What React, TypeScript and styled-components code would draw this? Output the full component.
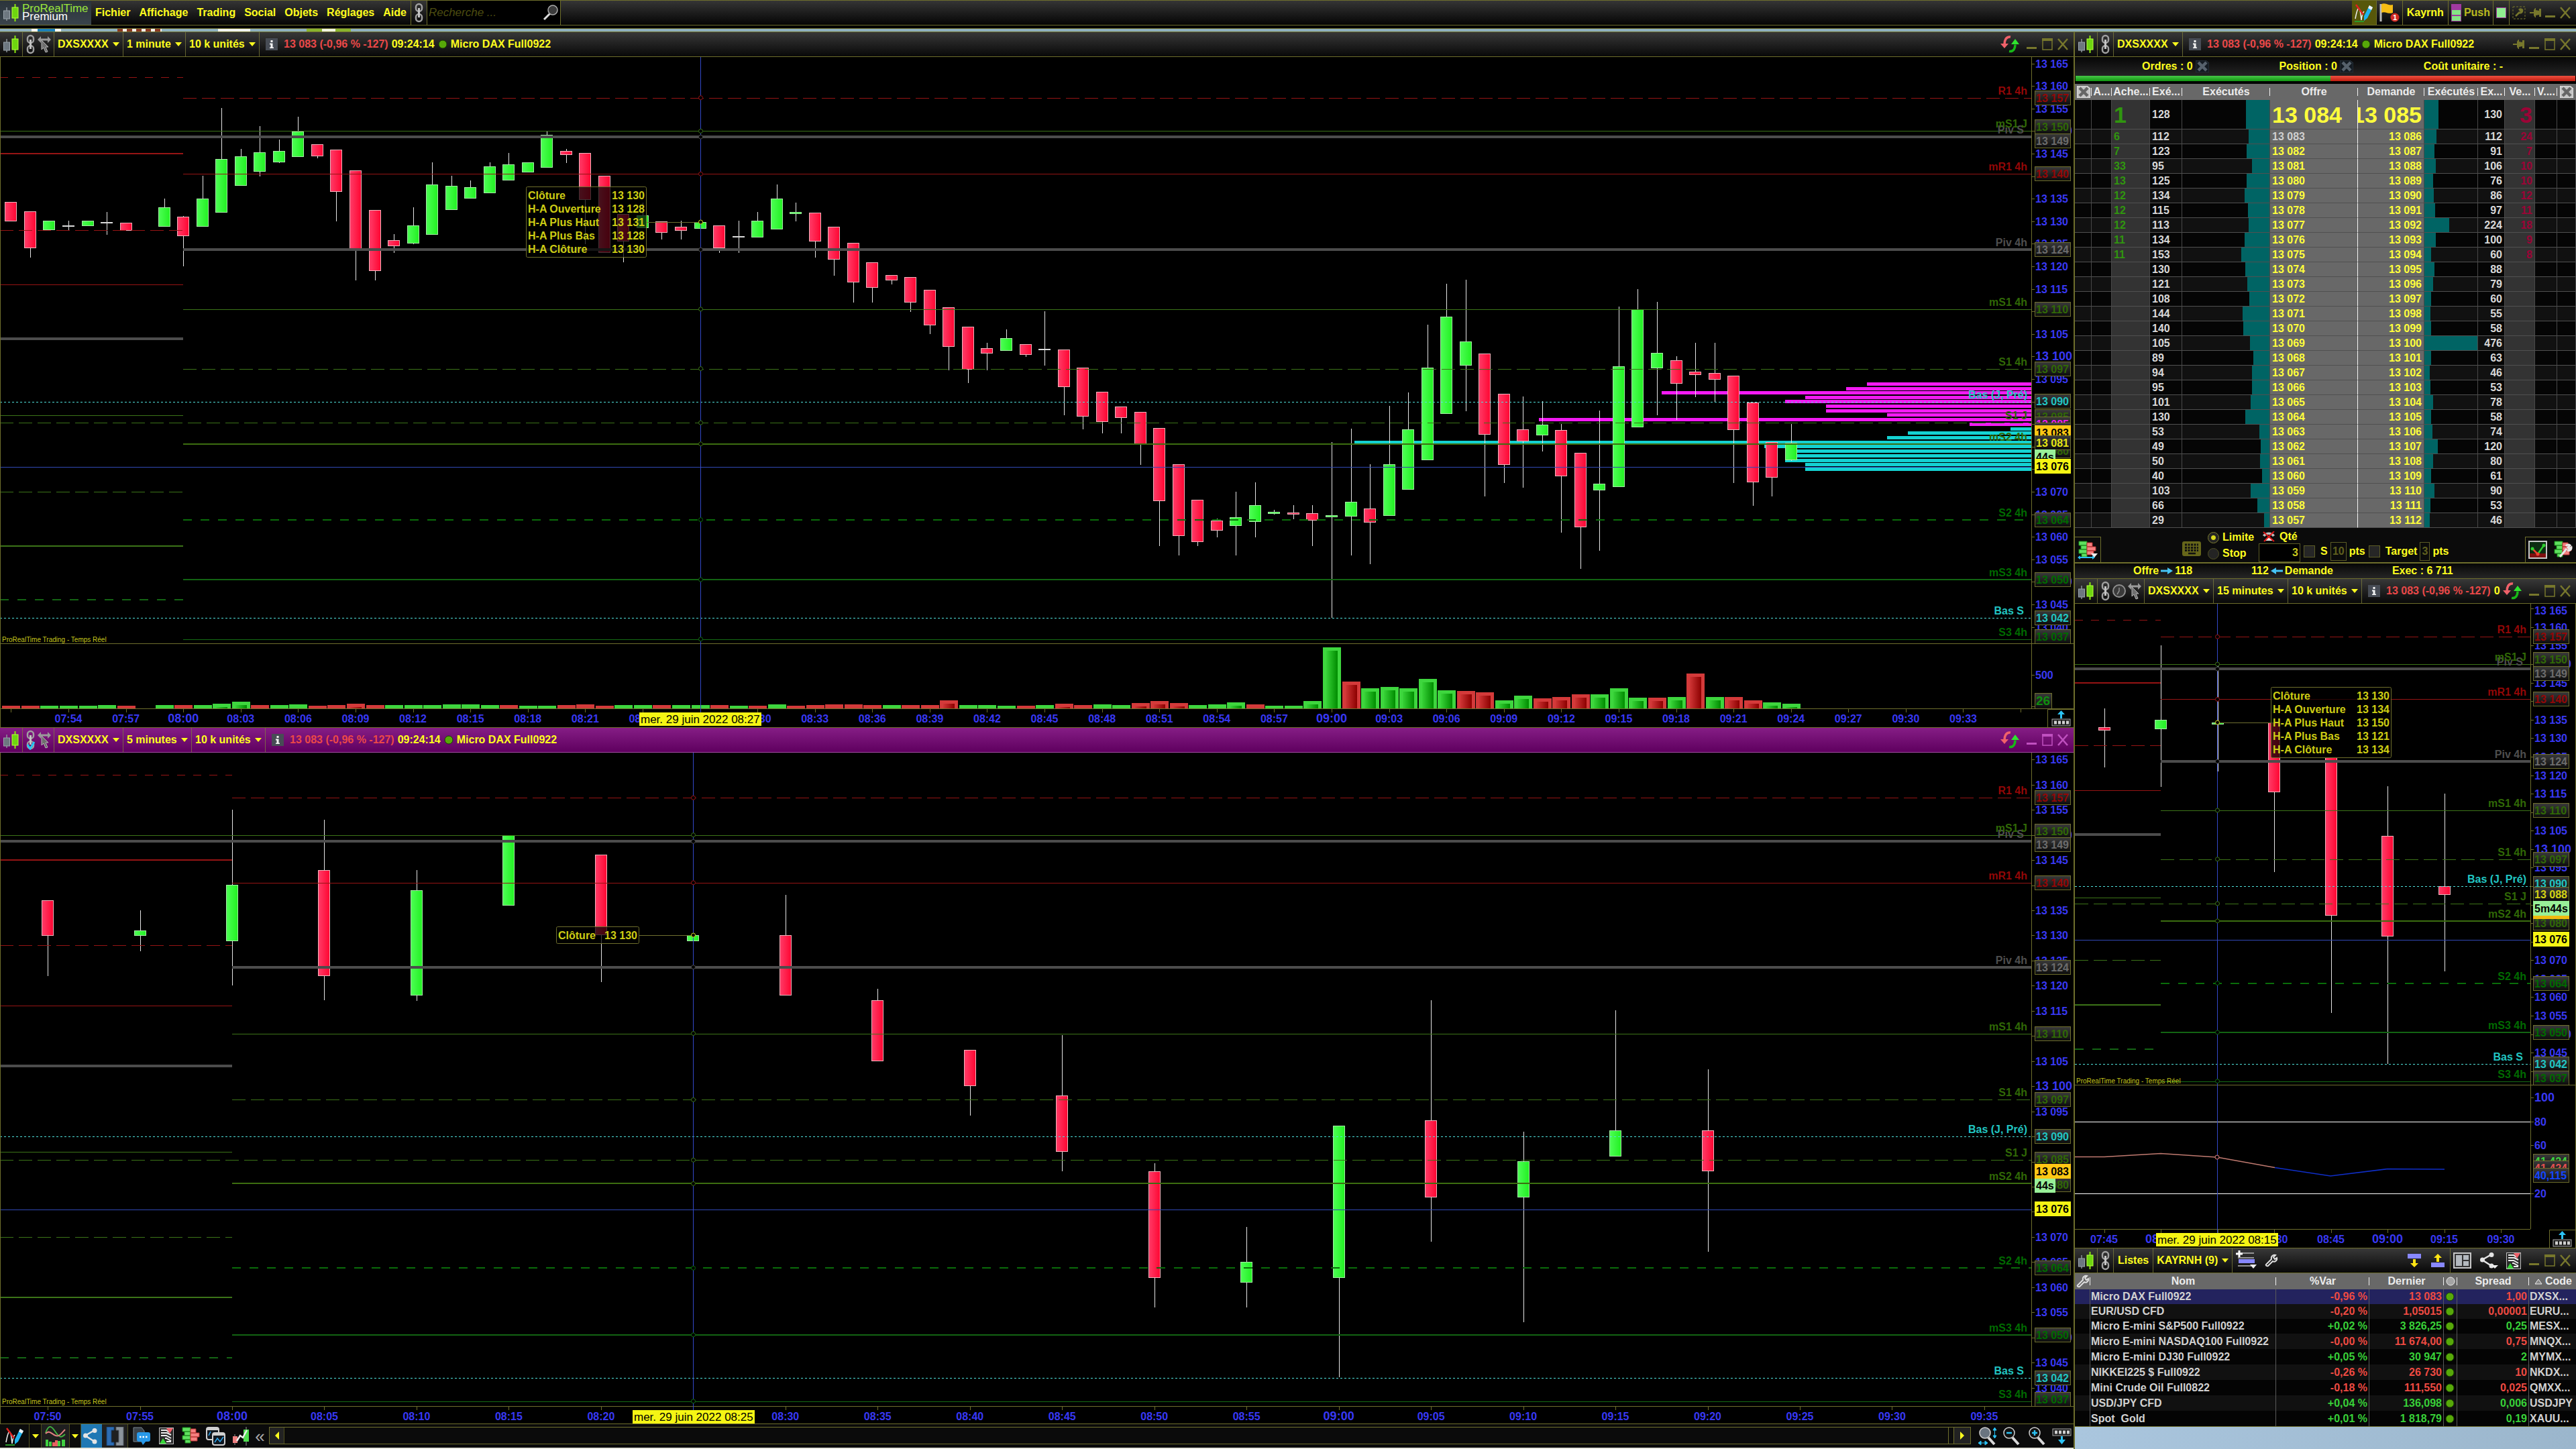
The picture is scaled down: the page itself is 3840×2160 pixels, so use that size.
import React from "react";
import styled, { createGlobalStyle, css } from "styled-components";

const OLIVE = "#6e6e2c";
const YELLOW = "#ffff1e";
const FONT = `"Liberation Sans", Arial, sans-serif`;

const GlobalStyle = createGlobalStyle`
  * { box-sizing: border-box; }
  body { margin: 0; background: #000; font: bold 16px/20px ${FONT}; color: ${YELLOW}; overflow: hidden; }
  button, input, select { font: inherit; color: inherit; margin: 0; }
  svg { display: block; flex: none; }
`;

/* ---------- page ---------- */

const Screen = styled.div`
  height: 100vh;
  display: flex;
  flex-direction: column;
`;

const plainButton = css`
  background: none;
  border: 0;
  padding: 0;
  display: flex;
  align-items: center;
  justify-content: center;
`;

const IconButton = styled.button`
  ${plainButton}
`;

const MenuBar = styled.header`
  height: 38px;
  flex: none;
  display: flex;
  border-top: 1px solid ${OLIVE};
  border-bottom: 1px solid ${OLIVE};
  background: linear-gradient(#353535, #050505);
`;

const Brand = styled.div`
  display: flex;
  align-items: center;
  gap: 4px;
  width: 136px;
  padding-left: 4px;
  background: linear-gradient(#2b343b, #39434b);
  font-weight: normal;
  font-size: 17px;
  line-height: 12px;
`;
const BrandName = styled.div`color: #9ae63c;`;
const BrandTier = styled.div`color: #fff;`;

const MenuItems = styled.nav`
  display: flex;
  align-items: center;
  gap: 13px;
  padding: 0 6px;
  border-right: 1px solid ${OLIVE};
`;

const MenuCell = styled.div<{ $pad?: number; $lit?: boolean; $dim?: boolean }>`
  display: flex;
  align-items: center;
  gap: 4px;
  padding: 0 ${(p) => p.$pad ?? 5}px;
  border-right: 1px solid ${OLIVE};
  background: ${(p) => (p.$lit ? "#57570a" : "none")};
  color: ${(p) => (p.$dim ? "#b9b91e" : YELLOW)};
`;

const SearchBox = styled.label`
  display: flex;
  align-items: center;
  width: 199px;
  padding: 0 2px;
  background: #000;
  border-right: 1px solid ${OLIVE};
`;
const SearchInput = styled.input`
  flex: 1;
  min-width: 0;
  background: none;
  border: 0;
  padding: 0;
  outline: none;
  font: italic 17px/20px ${FONT};
  &::placeholder { color: #4c4c10; opacity: 1; }
`;

const Spacer = styled.div`flex: 1;`;

const WindowButtons = styled.div`
  display: flex;
  align-items: center;
  gap: 6px;
  padding: 0 8px 0 4px;
`;

const DesktopStrip = styled.div`
  height: 5px;
  margin-top: 4px;
  flex: none;
  display: flex;
  border-top: 1px solid ${OLIVE};
  background: #8fb2c0;
  padding-left: 47px;
  gap: 84px;
`;
const StripIcon = styled.i<{ $bg: string; $w: number }>`
  width: ${(p) => p.$w}px;
  background: ${(p) => p.$bg};
`;

const Workspace = styled.main`
  flex: 1;
  min-height: 0;
  display: grid;
  grid-template-columns: minmax(0, 1fr) 749px;
`;
const Column = styled.section`
  display: flex;
  flex-direction: column;
  min-width: 0;
  min-height: 0;
`;
const SideColumn = styled(Column)`
  border-left: 2px solid ${OLIVE};
`;

/* ---------- title bars ---------- */

const Bar = styled.div<{ $active?: boolean }>`
  height: 38px;
  flex: none;
  display: flex;
  overflow: hidden;
  white-space: nowrap;
  border-top: 1px solid ${OLIVE};
  border-bottom: 1px solid ${(p) => (p.$active ? "#a04aa0" : OLIVE)};
  background: ${(p) =>
    p.$active ? "linear-gradient(#851d85, #5f005f)" : "linear-gradient(#383838, #080808)"};
`;
const BarCell = styled.div<{ $pad?: number }>`
  display: flex;
  align-items: center;
  gap: 3px;
  padding: 0 ${(p) => p.$pad ?? 4}px;
  border-right: 1px solid rgba(128, 128, 60, 0.75);
`;
const Quote = styled.div`
  flex: 1;
  min-width: 0;
  overflow: hidden;
  display: flex;
  align-items: center;
  gap: 5px;
  padding-left: 9px;
`;
const QuoteChange = styled.span`
  color: #ea4848;
  padding-left: 4px;
`;
const BarTools = styled.div<{ $gap?: number; $end?: number }>`
  display: flex;
  align-items: center;
  gap: ${(p) => p.$gap ?? 8}px;
  padding: 0 ${(p) => p.$end ?? 8}px 0 4px;
`;
const RefreshSlot = styled.div`margin-right: 4px;`;

const SelectWrap = styled.label`
  display: flex;
  align-items: center;
  gap: 6px;
  padding: 0 1px;
`;
const Select = styled.select`
  appearance: none;
  background: none;
  border: 0;
  padding: 0;
  outline: none;
`;

function Picker({ value, name }: { value: string; name: string }) {
  return (
    <BarCell>
      <SelectWrap>
        <Select aria-label={name} defaultValue={value}>
          <option>{value}</option>
        </Select>
        <Caret />
      </SelectWrap>
    </BarCell>
  );
}

/* ---------- icons ---------- */

const Caret = () => (
  <svg width="10" height="6"><path d="M0 0h10L5 6z" fill="#ffff1e" /></svg>
);

const CandlesIcon = () => (
  <svg width="25" height="28" viewBox="0 0 25 28">
    <path d="M6 6v20" stroke="#8a9299" strokeWidth="1.500" />
    <rect x="1.500" y="11" width="9" height="12" fill="#6d7780" stroke="#9aa4ac" />
    <path d="M18.500 1v26" stroke="#8be80c" strokeWidth="2" />
    <rect x="14" y="6" width="9" height="16" fill="#6ed60f" stroke="#b6ff3c" />
  </svg>
);

const ChainIcon = ({ checked }: { checked?: boolean }) => (
  <svg width="15" height="30" viewBox="0 0 15 30" fill="none" stroke="#a0a0a0" strokeWidth="2.500">
    <rect x="3" y="2" width="9" height="11" rx="4.500" />
    <rect x="3" y="17" width="9" height="11" rx="4.500" />
    <path d="M7.500 8v14" stroke="#c4c4c4" strokeWidth="3" />
    {checked && <path d="M3 22l4 6 6-10" stroke="#26c6f4" strokeWidth="3" />}
  </svg>
);

const CursorIcon = () => (
  <svg width="20" height="26" viewBox="0 0 20 26" fill="#9a9a9a">
    <path d="M0 6l5-5v3.500h10V1l5 5-5 5V7.500H5V11z" />
    <path d="M6 7l10 10h-4l3 7-3 1-3-7-3 3z" fill="#6f6f6f" stroke="#b5b5b5" />
  </svg>
);

const ClockIcon = () => (
  <svg width="20" height="26" viewBox="1 0 20 26" fill="none" stroke="#8f8f8f" strokeWidth="2">
    <circle cx="11" cy="13" r="9" fill="#3a3a3a" />
    <path d="M11 8v5l-3 5" strokeWidth="1.500" />
  </svg>
);

const InfoIcon = () => (
  <svg width="18" height="18" viewBox="0 0 18 18">
    <rect width="18" height="18" fill="#474c55" />
    <path d="M7.500 3h3v3h-3zM6 7.500h4.500v6H12v1.500H6v-1.500h1.500v-4H6z" fill="#f4f4f4" />
  </svg>
);

const Dot = () => (
  <svg width="14" height="14" viewBox="0 0 14 14">
    <circle cx="7" cy="7" r="6" fill="#57a809" stroke="#173f00" />
  </svg>
);

const SwapIcon = () => (
  <svg width="28" height="26" viewBox="0 0 28 26" fill="none" strokeWidth="3.500">
    <path d="M15 2C8 1 6 8 6 13" stroke="#f0616a" />
    <path d="M0 12h12l-6 7z" fill="#f0616a" />
    <path d="M13 23.500c7 1 9-5 9-10" stroke="#18b818" />
    <path d="M16 13h12l-6-8z" fill="#2fe52f" />
  </svg>
);

const MinIcon = ({ c }: { c: string }) => (
  <svg width="16" height="18"><rect y="13" width="15" height="3" fill={c} /></svg>
);
const MaxIcon = ({ c }: { c: string }) => (
  <svg width="16" height="18">
    <path d="M1 1h14v16H1z" fill="none" stroke={c} strokeWidth="1.500" />
    <rect width="16" height="4" fill={c} />
  </svg>
);
const CloseIcon = ({ c }: { c: string }) => (
  <svg width="16" height="18"><path d="M1 1l14 16M15 1L1 17" stroke={c} strokeWidth="2.500" /></svg>
);
const PinIcon = () => (
  <svg width="17" height="16" viewBox="0 0 17 16">
    <path d="M0 7h6V4l2-3h1v3l5 1V2h3v12h-3v-3l-5 1v3H8l-2-3V9H0z" fill="#77772c" />
  </svg>
);

const PencilIcon = () => (
  <svg width="28" height="28" viewBox="0 0 28 28" fill="none">
    <path d="M1 23c4-22 7-20 9 2 1-8 2-11 4-13" stroke="#eee" strokeWidth="1.500" />
    <path d="M2 2l11 15" stroke="#e02020" strokeWidth="2.500" />
    <path d="M0 27h14" stroke="#2a9a2a" strokeWidth="2" />
    <path d="M14 19L22 3l5 3-8 16-5 4z" fill="#1fb4f0" />
    <path d="M22 3l5 3-2 4-5-3z" fill="#f2f2f2" />
  </svg>
);
const FlagIcon = () => (
  <svg width="30" height="30" viewBox="0 0 30 30">
    <path d="M2 2v26" stroke="#bbb" strokeWidth="3" />
    <path d="M3 2c6-3 10 3 17 1v12c-7 3-11-3-17 0z" fill="#f6bd14" />
    <circle cx="23" cy="22" r="6.500" fill="#d02a22" />
    <text x="23" y="26" textAnchor="middle" fontSize="11" fill="#fff">1</text>
  </svg>
);
const PushIcon = () => (
  <svg width="15" height="26">
    <rect width="15" height="26" fill="#a03aa0" />
    <path d="M1 9h13v7H1zM1 18h13v7H1z" fill="#84e684" />
  </svg>
);
const SquareIcon = () => (
  <svg width="15" height="16"><rect x=".5" y=".5" width="14" height="15" fill="#90ee90" stroke="#a03aa0" /></svg>
);
const ToolsIcon = () => (
  <svg width="20" height="20" viewBox="0 0 20 20" fill="none" stroke="#77772c">
    <rect x="1" y="1" width="18" height="18" strokeDasharray="3 2" />
    <path d="M5 15l6-6M10 6a3 3 0 0 1 4-1l-2 2 1 1 2-1a3 3 0 0 1-4 3" strokeWidth="2.500" />
  </svg>
);
const LensIcon = ({ sign }: { sign?: "+" | "-" | "fit" }) => (
  <svg width="28" height="28" viewBox="0 0 28 28" fill="none">
    <path d="M15 16l9 10" stroke="#d8d8d8" strokeWidth="4" />
    <circle cx="10" cy="9" r="8" fill={sign === "fit" ? "#6a7480" : "#111"} stroke="#d0d0d0" strokeWidth="1.500" />
    {(sign === "+" || sign === "-") && <path d="M6 9h8" stroke="#2cc3f5" strokeWidth="2.500" />}
    {sign === "+" && <path d="M10 5v8" stroke="#2cc3f5" strokeWidth="2.500" />}
    {sign === "fit" && (
      <path d="M24.500 4v10M1 24h12M22 5l2.500-4L27 5zM22 13l2.500 4 2.500-4zM4 21l-4 3 4 3zM10 21l4 3-4 3z" stroke="#2cc3f5" fill="#2cc3f5" />
    )}
  </svg>
);
const SearchIcon = () => (
  <svg width="24" height="24" viewBox="0 0 24 24" fill="none">
    <path d="M11 13L2 22" stroke="#ddd" strokeWidth="3" />
    <circle cx="15" cy="8" r="7" fill="#3c3c3c" stroke="#aaa" strokeWidth="1.500" />
  </svg>
);
const CrossPageIcon = ({ light }: { light?: boolean }) => (
  <svg width="20" height="18" viewBox="0 0 20 18">
    <path d="M0 0h15l5 4v14H0z" fill={light ? "#c4c4c4" : "#141b22"} stroke={light ? "#eee" : "#2e3a44"} />
    <path d="M4 3l12 12M16 3L4 15" stroke={light ? "#666" : "#56616c"} strokeWidth="4.500" />
  </svg>
);
const KeyboardIcon = () => (
  <svg width="28" height="22" viewBox="0 0 28 22">
    <rect width="28" height="22" rx="3" fill="#66661a" />
    <path d="M4 5h20M4 9.500h20M4 13.500h20" stroke="#111" strokeWidth="3" strokeDasharray="3 1.500" />
    <path d="M9 18h11" stroke="#111" strokeWidth="2.500" />
  </svg>
);
const LadderIcon = ({ arrows, tool }: { arrows?: boolean; tool?: boolean }) => (
  <svg width="30" height="28" viewBox="0 0 30 28">
    <path d="M2 1h12v6H2zM5 7h9v6H5zM2 13h12v6H2zM6 19h8v5H6z" fill="#5fe05f" stroke="#1c8c1c" />
    <path d="M14 3h8v6h-8zM14 9h13v6H14zM14 15h10v6H14z" fill="#f58080" stroke="#b83030" />
    {arrows && <path d="M0 25l4-3v2h18v-2l4 3-4 3v-2H4v2z" fill="#2cc3f5" />}
    {arrows && <path d="M20 19h10l-5 6z" fill="#eee" />}
    {tool && <path d="M10 24L20 12M19 8a4 4 0 0 1 6-1l-3 3 2 2 3-2a4 4 0 0 1-6 4" stroke="#e8e8e8" strokeWidth="3" fill="none" />}
  </svg>
);
const StrategyIcon = () => (
  <svg width="28" height="27" viewBox="0 0 28 27" fill="none">
    <rect x="1" y="1" width="26" height="25" fill="#0d2d12" stroke="#c8c8c8" strokeWidth="2" />
    <path d="M2 19h24v6H2z" fill="#801010" />
    <path d="M6 12l8 8" stroke="#f04030" strokeWidth="2.500" />
    <path d="M14 20L23 7" stroke="#30d030" strokeWidth="2.500" />
    <circle cx="6" cy="12" r="2.500" fill="#30d030" /><circle cx="14" cy="20" r="2.500" fill="#f04030" /><circle cx="23" cy="7" r="2.500" fill="#30d030" />
  </svg>
);
const PhoneOffIcon = () => (
  <svg width="20" height="16" viewBox="0 0 20 16">
    <path d="M1 6c4-6 14-6 18 0l-3 2-3-3H7L4 8z" fill="#bdbdbd" />
    <path d="M5 14c0-6 10-6 10 0z" fill="#e6e6e6" />
    <path d="M2 1l16 14M18 0L3 15" stroke="#e01818" strokeWidth="2" />
  </svg>
);
const ArrowIcon = ({ left }: { left?: boolean }) => (
  <svg width="18" height="10" viewBox="0 0 18 10">
    <path d={left ? "M18 3.500H8V0L0 5l8 5V6.500h10z" : "M0 3.500h10V0l8 5-8 5V6.500H0z"} fill="#45c4f4" />
  </svg>
);
const AddListIcon = () => (
  <svg width="32" height="30" viewBox="0 0 32 30">
    <path d="M4 4h24M4 11h24M4 23h24" stroke="#b8b8b8" strokeWidth="1.500" />
    <rect x="5" y="13" width="24" height="6" fill="#8888ff" />
    <path d="M6 0v10M1 5h10" stroke="#fff" strokeWidth="3" />
    <path d="M22 21h10l-5 6z" fill="#eee" />
  </svg>
);
const WrenchIcon = () => (
  <svg width="20" height="20" viewBox="0 0 20 20" fill="none" stroke="#e0e0e0" strokeWidth="2">
    <path d="M2 16l8-8c-1-4 2-7 6-6l-3 3 2 3 3-2c1 4-3 7-6 5l-7 7c-2 1-4-1-3-2z" />
  </svg>
);
const MoveIcon = ({ up }: { up?: boolean }) => (
  <svg width="20" height="20" viewBox="0 0 20 20">
    <rect y={up ? 13 : 0} width="20" height="7" fill="#8888ff" />
    <path d={up ? "M8 12V6H4l6-6 6 6h-4v6z" : "M8 8v6H4l6 6 6-6h-4V8z"} fill="#ffe414" />
  </svg>
);
const PanesIcon = () => (
  <svg width="27" height="24" viewBox="0 0 27 24">
    <rect x="1" y="1" width="25" height="22" fill="#333" stroke="#c6c6c6" strokeWidth="2" />
    <path d="M4 4h9v16H4zM15 4h8v7h-8zM15 13h8v7h-8z" fill="#b4b9be" />
  </svg>
);
const ShareIcon = ({ caret }: { caret?: boolean }) => (
  <svg width="28" height="26" viewBox="0 0 28 26">
    <path d="M18 4L4 12l14 9" stroke="#e4e4e4" strokeWidth="2.500" fill="none" />
    <circle cx="18" cy="4.500" r="3.500" fill="#e4e4e4" /><circle cx="4.500" cy="12" r="3.500" fill="#e4e4e4" /><circle cx="18" cy="21" r="3.500" fill="#e4e4e4" />
    {caret && <path d="M18 20h10l-5 5z" fill="#eee" />}
  </svg>
);
const ReportIcon = () => (
  <svg width="22" height="25" viewBox="0 0 22 25">
    <rect x=".5" y=".5" width="21" height="24" fill="#2c2c2c" stroke="#bbb" />
    <path d="M3 4h8l4 3M3 8h9l6 3M3 12h8l7 4M9 16h2l7 4M11 21h7" stroke="#eee" strokeWidth="2" fill="none" />
    <path d="M11 1h10l-5 8z" fill="#f0606a" /><path d="M1 24h10l-5-8z" fill="#38d838" />
  </svg>
);
const IndicatorIcon = () => (
  <svg width="31" height="30" viewBox="0 0 31 30" fill="none">
    <path d="M1 10C6-4 10 0 16 9s9 8 14 3" stroke="#40b040" strokeWidth="2" />
    <path d="M1 11c6-6 9 1 15 3s9-4 14-9" stroke="#e08080" strokeWidth="2" />
    <path d="M1 20h4v10H1zM6 23h4v7H6zM19 22h4v8h-4zM25 20h5v10h-5z" fill="#40d040" />
    <path d="M11 24h4v6h-4zM15 21h4v9h-4z" fill="#e86060" />
  </svg>
);
const BracketsIcon = () => (
  <svg width="29" height="28" viewBox="0 0 29 28">
    <path d="M2 0h11v5H9v18h4v5H2z" fill="#2d6db4" stroke="#16406e" />
    <path d="M27 0H16v5h4v18h-4v5h11z" fill="#8c949c" stroke="#555d66" />
  </svg>
);
const ChatIcon = () => (
  <svg width="27" height="27" viewBox="0 0 27 27">
    <path d="M2 1h12l4 5v16H2z" fill="#3b4249" stroke="#7b858e" />
    <rect x="7" y="8" width="20" height="14" rx="3" fill="#2898e8" /><path d="M13 21h8l-5 6z" fill="#2898e8" />
    <path d="M11 15h12" stroke="#fff" strokeWidth="2.500" strokeDasharray="2.500 2" />
  </svg>
);
const WindowsIcon = () => (
  <svg width="29" height="28" viewBox="0 0 29 28" fill="none">
    <rect x="1" y="1" width="18" height="18" rx="3" fill="#101820" stroke="#d0d0d0" strokeWidth="2" />
    <rect x="10" y="9" width="18" height="18" rx="3" fill="#101820" stroke="#d0d0d0" strokeWidth="2" />
    <path d="M10 11h18M1 3h18" stroke="#d0d0d0" strokeWidth="4" />
    <path d="M13 23l4-6 4 5 5-7M4 13l3-6" stroke="#30a8f0" strokeWidth="1.500" />
  </svg>
);
const TradeCandlesIcon = () => (
  <svg width="26" height="28" viewBox="0 0 26 28" fill="none">
    <path d="M4 11v16M21 0v28" stroke="#999" />
    <rect x="1" y="14" width="7" height="10" fill="#f08080" /><rect x="17" y="4" width="8" height="18" fill="#50e050" />
    <path d="M7 21l5-8 4 3 6-11" stroke="#eee" strokeWidth="2.500" />
  </svg>
);
const AxisKeysIcon = ({ down }: { down?: boolean }) => (
  <svg width="29" height="24" viewBox="0 0 29 24">
    <rect x="1" y={down ? 1 : 13} width="27" height="10" fill="#1e1e1e" stroke="#a8a8a8" />
    <path d={down ? "M4 6h22" : "M4 18h22"} stroke="#d0d0d0" strokeWidth="5" strokeDasharray="4 2" />
    <path d={down ? "M13 12h3v5h4l-5.500 7L9 17h4z" : "M13 12h3V6h4l-5.500-6L9 6h4z"} fill="#2cc3f5" />
  </svg>
);

/* ---------- charts ---------- */

type Candle = [number, "g" | "r" | "d", number, number, number, number];

const Label = styled.text<{ $size?: number; $weight?: string }>`
  font: ${(p) => p.$weight ?? "bold"} ${(p) => p.$size ?? 16}px ${FONT};
  white-space: pre;
`;
const ChartFrame = styled.svg<{ $grow: number }>`
  flex: ${(p) => p.$grow} 1 0;
  min-height: 0;
  width: 100%;
  background: #000;
`;

const RED = "#961414", GREEN = "#3c7418", FOREST = "#146414", GREY = "#4c4c4c", CYAN = "#21c5c2", CYAN_LINE = "#4fe0da";
const DARK_RED = "#930707", DARK_GREEN = "#306806", DEEP_GREEN = "#006a00", BLUE = "#3838f4";

interface Level {
  p: number; c: string; w: number; dash?: string; span: "all" | "session" | "prev";
  name?: string; text?: string; inset?: number;
}
const LEVELS: Level[] = [
  { p: 13162, c: RED, w: 1, dash: "12 12", span: "prev" },
  { p: 13145, c: RED, w: 2, span: "prev" },
  { p: 13128.1, c: RED, w: 1, dash: "20 8", span: "prev" },
  { p: 13116, c: RED, w: 1, span: "prev" },
  { p: 13104, c: GREY, w: 4, span: "prev" },
  { p: 13087, c: GREEN, w: 1, span: "prev" },
  { p: 13070, c: GREEN, w: 1, dash: "20 8", span: "prev" },
  { p: 13058, c: GREEN, w: 2, span: "prev" },
  { p: 13046, c: FOREST, w: 2, dash: "13 13", span: "prev" },
  { p: 13157.4, c: RED, w: 1, dash: "20 8", span: "session", name: "R1 4h", text: DARK_RED },
  { p: 13148.7, c: GREY, w: 4, span: "all", name: "Piv S", text: "#4e4e4e", inset: 5 },
  { p: 13150, c: GREEN, w: 1, span: "all", name: "mS1 J", text: DARK_GREEN },
  { p: 13140.5, c: RED, w: 1, span: "session", name: "mR1 4h", text: DARK_RED },
  { p: 13123.7, c: GREY, w: 4, span: "session", name: "Piv 4h", text: "#4e4e4e" },
  { p: 13110.5, c: GREEN, w: 1, span: "session", name: "mS1 4h", text: DARK_GREEN },
  { p: 13097.3, c: GREEN, w: 1, dash: "20 8", span: "session", name: "S1 4h", text: DARK_GREEN },
  { p: 13090, c: CYAN_LINE, w: 1, dash: "3 3", span: "all", name: "Bas (J, Pré)", text: CYAN },
  { p: 13085.3, c: GREEN, w: 1, dash: "20 8", span: "all", name: "S1 J", text: DARK_GREEN },
  { p: 13080.6, c: "#3c6e10", w: 2, span: "session", name: "mS2 4h", text: DARK_GREEN },
  { p: 13075.5, c: "#3148b4", w: 1, span: "all" },
  { p: 13063.8, c: "#0a6c0a", w: 2, dash: "13 13", span: "session", name: "S2 4h", text: DEEP_GREEN },
  { p: 13050.5, c: "#126412", w: 2, span: "session", name: "mS3 4h", text: DEEP_GREEN },
  { p: 13042, c: CYAN_LINE, w: 1, dash: "3 3", span: "all", name: "Bas S", text: CYAN, inset: 5 },
  { p: 13037.3, c: "#146c14", w: 1, span: "session", name: "S3 4h", text: DEEP_GREEN },
];
const CROSSED = [13157.4, 13150, 13148.7, 13140.5, 13123.7, 13110.5, 13097.3, 13085.3, 13080.6, 13063.8, 13050.5, 13037.3];

interface Tag { y: number; t: string; c: string; bg?: string; w?: number; h?: number; size?: number }

const spaced = (p: number) => `13 ${String(p - 13000).padStart(3, "0")}`;
const clock = (m: number) => `${String(Math.floor(m / 60)).padStart(2, "0")}:${String(m % 60).padStart(2, "0")}`;

function ChartDefs() {
  return (
    <defs>
      <linearGradient id="up"><stop offset="0" stopColor="#4dff55" /><stop offset="1" stopColor="#22f022" /></linearGradient>
      <linearGradient id="down"><stop offset="0" stopColor="#ff3c68" /><stop offset="1" stopColor="#ff0531" /></linearGradient>
      <linearGradient id="volUp"><stop offset="0" stopColor="#37d237" /><stop offset="1" stopColor="#008c00" /></linearGradient>
      <linearGradient id="volDown"><stop offset="0" stopColor="#cf3535" /><stop offset="1" stopColor="#8c0000" /></linearGradient>
      <linearGradient id="tag" x2="0" y2="1"><stop offset="0" stopColor="#3a3a3a" /><stop offset="1" stopColor="#0c0c0c" /></linearGradient>
    </defs>
  );
}

function Candles({ data, x }: { data: Candle[]; x: (i: number) => number }) {
  return (
    <g shapeRendering="crispEdges">
      {data.map(([i, kind, hi, top, bot, lo]) => {
        const cx = Math.round(x(i));
        return (
          <g key={i}>
            <rect x={cx} y={hi} width="1" height={lo - hi} fill="#e6e6e6" />
            {kind === "d" ? (
              <rect x={cx - 9} y={top} width="18" height="2" fill="#dcdcdc" />
            ) : (
              <rect x={cx - 8.5} y={top + 0.5} width="17" height={Math.max(bot - top - 1, 1)}
                fill={`url(#${kind === "g" ? "up" : "down"})`} stroke={kind === "g" ? "#a5eba5" : "#f2b4bc"} />
            )}
          </g>
        );
      })}
    </g>
  );
}

function Levels({ x0, session, right, y }: { x0: number; session: number; right: number; y: (p: number) => number }) {
  return (
    <>
      <g shapeRendering="crispEdges">
        {LEVELS.map((l) => {
          const yy = Math.round(y(l.p)) + (l.w === 1 ? 0.5 : 0);
          return (
            <line key={`${l.p}${l.span}`} x1={l.span === "session" ? session : x0} x2={l.span === "prev" ? session : right}
              y1={yy} y2={yy} stroke={l.c} strokeWidth={l.w} strokeDasharray={l.dash} />
          );
        })}
      </g>
      {LEVELS.filter((l) => l.name).map((l) => (
        <Label key={l.name} x={right - 6 - (l.inset ?? 0)} y={y(l.p) - 5} textAnchor="end" fill={l.text}>{l.name}</Label>
      ))}
    </>
  );
}

function PriceAxis({ right, top, bottom, y, hidden }: { right: number; top: number; bottom: number; y: (p: number) => number; hidden: number[] }) {
  const prices = Array.from({ length: 26 }, (_, i) => 13165 - i * 5);
  return (
    <>
      <path d={`M${right + 0.5} ${top}V${bottom}`} stroke={OLIVE} />
      {prices.map((p) => (
        <g key={p}>
          <path d={`M${right} ${Math.round(y(p)) + 0.5}h5`} stroke={OLIVE} />
          {!hidden.includes(p) && (
            <Label x={right + 6} y={Math.max(y(p) + 6, top + 16)} fill={BLUE} $size={p % 50 ? 16 : 18}>{spaced(p)}</Label>
          )}
        </g>
      ))}
    </>
  );
}

function Tags({ x, tags }: { x: number; tags: Tag[] }) {
  return (
    <>
      {tags.map((t, i) => {
        const h = t.h ?? 22, w = t.w ?? 54;
        const y0 = Math.round(t.y - h / 2);
        return (
          <g key={i}>
            <rect x={x + 0.5} y={y0 + 0.5} width={w - 1} height={h - 1} fill={t.bg ?? "url(#tag)"} stroke={t.bg ?? OLIVE} />
            <Label x={x + 2} y={y0 + h / 2 + 6} fill={t.c} $size={t.size}>{t.t}</Label>
          </g>
        );
      })}
    </>
  );
}

function TimeAxis({ start, count, step, x, y, hidden }: { start: number; count: number; step: number; x: (m: number) => number; y: number; hidden: number[] }) {
  return (
    <>
      {Array.from({ length: count }, (_, i) => start + i * step).map((m) => (
        <g key={m}>
          <path d={`M${Math.round(x(m)) + 0.5} ${y}v5`} stroke={OLIVE} />
          {!hidden.includes(m) && (
            <Label x={x(m)} y={y + 20} textAnchor="middle" fill={BLUE} $size={m % 60 ? 16 : 18}>{clock(m)}</Label>
          )}
        </g>
      ))}
    </>
  );
}

function Crosshair({ x, top, bottom, y }: { x: number; top: number; bottom: number; y: (p: number) => number }) {
  return (
    <>
      <path d={`M${x + 0.5} ${top}V${bottom}`} stroke="#3248c8" />
      {CROSSED.map((p) => {
        const l = LEVELS.find((v) => v.p === p)!;
        return <circle key={p} cx={x + 0.5} cy={y(p)} r="3" fill="#000" stroke={l.c} />;
      })}
    </>
  );
}

function Tip({ x, y, w, rows, from }: { x: number; y: number; w: number; rows: [string, string][]; from: [number, number] }) {
  const h = rows.length * 20 + 6;
  return (
    <g>
      <path d={`M${from[0] > x ? x + w : x} ${from[1] + 0.5}H${from[0]}`} stroke="#6f6f30" />
      <rect x={x + 0.5} y={y + 0.5} width={w - 1} height={h - 1} rx="2" fill="#000" fillOpacity=".72" stroke={OLIVE} />
      {rows.map(([k, v], i) => (
        <g key={k} fill="#cdcd14">
          <Label x={x + 3} y={y + 19 + i * 20}>{k}</Label>
          <Label x={x + w - 3} y={y + 19 + i * 20} textAnchor="end">{v}</Label>
        </g>
      ))}
      <circle cx={from[0] + 0.5} cy={from[1]} r="3" fill="#000" stroke="#d8d820" />
    </g>
  );
}

function DateFlag({ x, y, text }: { x: number; y: number; text: string }) {
  return (
    <g>
      <rect x={x} y={y} width="182" height="20" fill="#f5f514" />
      <Label x={x + 2} y={y + 16} fill="#000" $size={17} $weight="normal">{text}</Label>
    </g>
  );
}

const Watermark = ({ x, y }: { x: number; y: number }) => (
  <Label x={x} y={y} fill="#c6c61c" $size={10} $weight="normal">ProRealTime Trading - Temps Réel</Label>
);

/* one-minute chart */

const M1: Candle[] = [
  [-9, "r", 301, 301, 330, 330], [-8, "r", 315, 315, 370, 384], [-7, "g", 329, 329, 343, 343], [-6, "d", 329, 336, 337, 343],
  [-5, "g", 329, 329, 337, 337], [-4, "d", 316, 331, 332, 350], [-3, "r", 332, 332, 344, 344], [-1, "g", 296, 309, 338, 338],
  [0, "r", 322, 323, 352, 397], [1, "g", 262, 296, 338, 338], [2, "g", 161, 237, 317, 317], [3, "g", 222, 233, 277, 277],
  [4, "g", 188, 227, 256, 263], [5, "g", 208, 225, 242, 243], [6, "g", 174, 196, 234, 234], [7, "r", 215, 215, 233, 236],
  [8, "r", 223, 223, 286, 330], [9, "r", 254, 254, 371, 418], [10, "r", 313, 313, 404, 418], [11, "r", 349, 358, 367, 377],
  [12, "g", 309, 336, 363, 364], [13, "g", 242, 275, 350, 350], [14, "g", 262, 277, 313, 313], [15, "g", 269, 279, 296, 296],
  [16, "g", 242, 248, 288, 288], [17, "g", 228, 245, 269, 269], [18, "g", 242, 242, 257, 257], [19, "g", 196, 201, 250, 250],
  [20, "r", 222, 225, 231, 243], [21, "r", 228, 228, 298, 364], [22, "r", 262, 262, 377, 377], [23, "r", 319, 319, 360, 391],
  [24, "g", 302, 321, 340, 340], [25, "r", 330, 330, 347, 357], [26, "r", 329, 338, 344, 357], [27, "g", 321, 331, 341, 341],
  [28, "r", 336, 336, 370, 377], [29, "d", 329, 352, 353, 377], [30, "g", 316, 329, 354, 354], [31, "g", 275, 296, 342, 342],
  [32, "g", 302, 316, 319, 330], [33, "r", 317, 317, 360, 384], [34, "r", 338, 338, 387, 411], [35, "r", 362, 362, 421, 451],
  [36, "r", 391, 391, 429, 451], [37, "r", 410, 410, 418, 424], [38, "r", 413, 413, 451, 465], [39, "r", 432, 432, 485, 498],
  [40, "r", 458, 458, 517, 552], [41, "r", 487, 487, 551, 571], [42, "r", 511, 519, 527, 552], [43, "g", 491, 504, 523, 523],
  [44, "r", 513, 513, 529, 532], [45, "d", 464, 520, 521, 545], [46, "r", 521, 521, 577, 619], [47, "r", 548, 548, 621, 640],
  [48, "r", 584, 584, 629, 646], [49, "r", 606, 606, 623, 646], [50, "r", 614, 614, 663, 693], [51, "r", 638, 638, 747, 814],
  [52, "r", 692, 692, 799, 828], [53, "r", 745, 745, 808, 814], [54, "r", 773, 776, 791, 801], [55, "g", 733, 771, 784, 828],
  [56, "g", 719, 753, 778, 801], [57, "g", 760, 763, 766, 767], [58, "r", 753, 764, 767, 774], [59, "r", 753, 765, 776, 814],
  [60, "g", 659, 768, 771, 921], [61, "g", 639, 748, 770, 828], [62, "r", 692, 758, 779, 841], [63, "g", 605, 692, 769, 769],
  [64, "g", 585, 640, 730, 730], [65, "g", 484, 548, 686, 686], [66, "g", 423, 472, 617, 617], [67, "g", 417, 509, 545, 613],
  [68, "r", 527, 527, 648, 740], [69, "r", 587, 587, 693, 720], [70, "r", 591, 640, 658, 727], [71, "g", 598, 633, 649, 673],
  [72, "r", 632, 641, 710, 794], [73, "r", 675, 675, 786, 848], [74, "g", 612, 721, 731, 821], [75, "g", 457, 546, 726, 726],
  [76, "g", 431, 461, 637, 637], [77, "g", 450, 526, 549, 619], [78, "r", 531, 537, 572, 626], [79, "r", 511, 554, 559, 592],
  [80, "r", 511, 556, 566, 599], [81, "r", 560, 560, 641, 720], [82, "r", 600, 600, 719, 754], [83, "r", 659, 659, 712, 740],
  [84, "g", 632, 660, 686, 687],
];

const VOLUME =
  "r4 r4 g4 g4 g4 g5 r4 n0 g5 r5 g5 g7 g10 r5 g5 g6 r4 r5 r7 r5 g5 g5 g5 g6 g6 g5 r5 g4 g4 r5 r6 r4 g5 g5 r5 g5 g5 r5 g4 r4 g6 r4 r5 r6 r6 r5 g5 r5 r5 r12 g5 g5 g4 r4 g5 r7 r5 g6 g5 r8 r11 r8 g5 g6 g9 r6 g4 g4 g11 g91 r40 g30 g32 g30 g44 g27 r26 r24 g12 g19 r15 r17 r21 g21 g30 g16 r16 g17 r52 g17 r17 r12 g9 g7".split(" ");

const PROFILE: [number, number, string][] = [
  [572, 2783, "m"], [579, 2752, "m"], [585, 2477, "m"], [592, 2691, "m"], [598, 2661, "m"], [605, 2722, "m"], [612, 2722, "m"],
  [618, 2813, "m"], [625, 2294, "m"], [632, 2936, "m"], [639, 2997, "c"], [645, 2844, "c"], [652, 2813, "c"], [659, 2019, "c"],
  [665, 2630, "c"], [672, 2661, "c"], [679, 2661, "c"], [686, 2661, "c"], [692, 2691, "c"], [699, 2691, "c"],
];

const tagsFor = (y: (p: number) => number): Tag[] => [
  { y: y(13157.4), t: "13 157", c: DARK_RED },
  { y: y(13140.5), t: "13 140", c: DARK_RED },
  { y: y(13123.7), t: "13 124", c: "#6c6c6c" },
  { y: y(13110.5), t: "13 110", c: DARK_GREEN },
  { y: y(13097.3), t: "13 097", c: DARK_GREEN },
  { y: y(13063.8), t: "13 064", c: DEEP_GREEN },
  { y: y(13050.5), t: "13 050", c: DEEP_GREEN },
  { y: y(13042), t: "13 042", c: CYAN },
];

function MinuteChart() {
  const y = (p: number) => 94.6 + (13165 - p) * 6.72;
  const x = (i: number) => 273.2 + i * 28.53;
  return (
    <ChartFrame $grow={999} viewBox="0 85 3091 999" preserveAspectRatio="none">
      <ChartDefs />
      <g shapeRendering="crispEdges">
        {PROFILE.map(([py, px, c]) => (
          <rect key={py} x={px} y={py - 2} width={3028 - px} height="5" fill={c === "m" ? "#f31af3" : "#14d2d2"} />
        ))}
        {VOLUME.map((v, k) => {
          const h = Number(v.slice(1)), up = v[0] === "g", bx = Math.round(x(k - 9)) - 13;
          return h ? (
            <g key={k}>
              <rect x={bx} y={1056 - h} width="27" height={h} fill={up ? "#3ed63e" : "#d43a3a"} />
              {h > 6 && <rect x={bx + 5} y={1061 - h} width="17" height={h - 5} fill={`url(#${up ? "volUp" : "volDown"})`} />}
            </g>
          ) : null;
        })}
      </g>
      <Candles data={M1} x={x} />
      <Levels x0={0} session={273} right={3028} y={y} />
      <path d="M0 959.500H3091M0 1056.500H3091" stroke={OLIVE} />
      <Watermark x={3} y={957} />
      <PriceAxis right={3028} top={85} bottom={1056} y={y} hidden={[13140, 13110, 13090, 13085, 13080, 13075]} />
      <Label x={3034} y={1012} fill={BLUE}>500</Label>
      <path d="M3028 1006.500h5M3028 1053.500h5" stroke={OLIVE} />
      <Tags x={3033} tags={[
        ...tagsFor(y),
        { y: 189, t: "13 150", c: DARK_GREEN }, { y: 210, t: "13 149", c: "#6c6c6c" },
        { y: 598, t: "13 090", c: CYAN }, { y: 621, t: "13 085", c: DARK_GREEN }, { y: 632, t: "13 085", c: "#f01af0" },
        { y: 641, t: "13 084", c: CYAN }, { y: 645, t: "13 083", c: "#000", bg: "#ffc814" }, { y: 672, t: "13 080", c: DARK_GREEN },
        { y: 660, t: "13 081", c: "#e6e614" }, { y: 681, t: "44s", c: "#000", bg: "#98f098", w: 31 },
        { y: 695, t: "13 076", c: "#000", bg: "#f5f514" }, { y: 949, t: "13 037", c: DEEP_GREEN },
        { y: 1045, t: "26", c: "#0f8c0f", w: 26, h: 24, size: 19 },
      ]} />
      <TimeAxis start={471} count={36} step={3} x={(m) => x(m - 480)} y={1057} hidden={[471, 507, 576]} />
      <Crosshair x={1044} top={85} bottom={1062} y={y} />
      <Tip x={784} y={278} w={180} from={[1044, 331]} rows={[["Clôture", "13 130"], ["H-A Ouverture", "13 128"], ["H-A Plus Haut", "13 131"], ["H-A Plus Bas", "13 128"], ["H-A Clôture", "13 130"]]} />
      <DateFlag x={953} y={1062} text="mer. 29 juin 2022 08:27" />
      <path d="M3052.500 1084V1057.500H3091" stroke={OLIVE} fill="#000" />
      <g transform="translate(3058 1059)"><AxisKeysIcon /></g>
      <path d="M.5 85V1084" stroke={OLIVE} />
    </ChartFrame>
  );
}

/* five-minute chart */

const M5: Candle[] = [
  [-2, "r", 1342, 1342, 1395, 1455], [-1, "g", 1357, 1387, 1395, 1418], [0, "g", 1207, 1319, 1403, 1469], [1, "r", 1222, 1297, 1455, 1491],
  [2, "g", 1297, 1327, 1484, 1492], [3, "g", 1245, 1245, 1350, 1350], [4, "r", 1274, 1274, 1394, 1464], [5, "g", 1388, 1394, 1403, 1447],
  [6, "r", 1334, 1394, 1484, 1484], [7, "r", 1474, 1491, 1582, 1582], [8, "r", 1565, 1565, 1619, 1663], [9, "r", 1543, 1633, 1717, 1746],
  [10, "r", 1734, 1746, 1905, 1949], [11, "g", 1829, 1881, 1912, 1949], [12, "g", 1678, 1678, 1905, 2053], [13, "r", 1491, 1670, 1785, 1851],
  [14, "g", 1687, 1731, 1785, 1971], [15, "g", 1506, 1685, 1724, 1724], [16, "r", 1594, 1685, 1746, 1866],
];

function FiveMinuteChart() {
  const y = (p: number) => 1132.3 + (13165 - p) * 7.49;
  const x = (i: number) => 346 + i * 137.47;
  return (
    <ChartFrame $grow={1000} viewBox="0 1122 3091 1000" preserveAspectRatio="none">
      <Candles data={M5} x={x} />
      <Levels x0={0} session={346} right={3028} y={y} />
      <Watermark x={3} y={2093} />
      <path d="M0 2096.500H3091" stroke={OLIVE} />
      <PriceAxis right={3028} top={1122} bottom={2096} y={y} hidden={[13140, 13110, 13090, 13085, 13080, 13075]} />
      <Tags x={3033} tags={[
        ...tagsFor(y),
        { y: 1239, t: "13 150", c: DARK_GREEN }, { y: 1259, t: "13 149", c: "#6c6c6c" },
        { y: 1694, t: "13 090", c: CYAN }, { y: 1728, t: "13 085", c: DARK_GREEN }, { y: 1766, t: "13 080", c: DARK_GREEN },
        { y: 1767, t: "44s", c: "#000", bg: "#98f098", w: 31 }, { y: 1746, t: "13 083", c: "#000", bg: "#ffc814" },
        { y: 1802, t: "13 076", c: "#000", bg: "#f5f514" }, { y: 2086, t: "13 037", c: DEEP_GREEN },
      ]} />
      <TimeAxis start={470} count={22} step={5} x={(m) => x((m - 480) / 5)} y={2097} hidden={[505]} />
      <Crosshair x={1033} top={1122} bottom={2102} y={y} />
      <Tip x={829} y={1381} w={124} from={[1033, 1394]} rows={[["Clôture", "13 130"]]} />
      <DateFlag x={943} y={2102} text="mer. 29 juin 2022 08:25" />
      <path d="M.5 1122V2122" stroke={OLIVE} />
    </ChartFrame>
  );
}

/* fifteen-minute chart */

const M15: Candle[] = [
  [-1, "r", 1056, 1084, 1089, 1144], [0, "g", 962, 1073, 1087, 1173], [1, "g", 990, 1077, 1080, 1150], [2, "r", 1077, 1077, 1181, 1300],
  [3, "r", 1129, 1129, 1365, 1510], [4, "r", 1172, 1246, 1396, 1586], [5, "r", 1183, 1321, 1334, 1448],
];

function QuarterHourChart() {
  const y = (p: number) => 907.3 + (13165 - p) * 5.516;
  const x = (i: number) => 3221 + i * 84.5;
  return (
    <ChartFrame $grow={960} viewBox="3093 900 747 960" preserveAspectRatio="none">
      <Candles data={M15} x={x} />
      <Levels x0={3093} session={3221} right={3772} y={y} />
      <path d="M3093 1672.500H3772M3093 1779.500H3772" stroke="#fff" />
      <path d="M3093 1617.500H3840M3093 1832.500H3772" stroke={OLIVE} />
      <Watermark x={3095} y={1615} />
      <path d="M3093 1724.500H3137L3221 1719.500L3305 1725L3391 1740.500" stroke="#c07a70" fill="none" strokeWidth="1.500" />
      <path d="M3391 1740.500L3474 1753L3559 1742.500L3644 1743" stroke="#0f2ec8" fill="none" strokeWidth="1.500" />
      <PriceAxis right={3772} top={900} bottom={1832} y={y} hidden={[13140, 13110, 13090, 13085, 13080, 13075, 13040]} />
      {[[100, 1636], [80, 1672], [60, 1707], [20, 1779]].map(([v, ty]) => (
        <g key={v}>
          <path d={`M3772 ${ty + 0.5}h5`} stroke={OLIVE} />
          <Label x={3778} y={ty + 6} fill={BLUE} $size={v === 100 ? 18 : 16}>{v}</Label>
        </g>
      ))}
      <Tags x={3776} tags={[
        ...tagsFor(y),
        { y: 983, t: "13 150", c: DARK_GREEN }, { y: 1004, t: "13 149", c: "#6c6c6c" },
        { y: 1317, t: "13 090", c: CYAN }, { y: 1376, t: "13 080", c: DARK_GREEN }, { y: 1359, t: "13 083", c: "#000", bg: "#f0b90f" },
        { y: 1333, t: "13 088", c: "#d2d214" }, { y: 1354, t: "5m44s", c: "#000", bg: "#98f098" },
        { y: 1400, t: "13 076", c: "#000", bg: "#f5f514" }, { y: 1607, t: "13 037", c: DEEP_GREEN },
        { y: 1731, t: "41,424", c: "#3fd23f" }, { y: 1741, t: "41,424", c: "#e05050" }, { y: 1752, t: "40,115", c: "#1446ff" },
      ]} />
      <TimeAxis start={465} count={8} step={15} x={(m) => x((m - 480) / 15)} y={1833} hidden={[495]} />
      <Crosshair x={3305} top={900} bottom={1838} y={y} />
      <circle cx="3305" cy="1725" r="3" fill="#000" stroke="#e08080" />
      <Tip x={3385} y={1024} w={180} from={[3305, 1077]} rows={[["Clôture", "13 130"], ["H-A Ouverture", "13 134"], ["H-A Plus Haut", "13 150"], ["H-A Plus Bas", "13 121"], ["H-A Clôture", "13 134"]]} />
      <DateFlag x={3214} y={1838} text="mer. 29 juin 2022 08:15" />
      <path d="M3800.500 1860V1833.500H3840" stroke={OLIVE} fill="#000" />
      <g transform="translate(3805 1835)"><AxisKeysIcon /></g>
      <path d="M3839.500 900V1860" stroke={OLIVE} />
    </ChartFrame>
  );
}

/* ---------- toolbars ---------- */

function Frames({ color = "#77772c", pin, noMax }: { color?: string; pin?: boolean; noMax?: boolean }) {
  return (
    <>
      {pin && <IconButton aria-label="Pin"><PinIcon /></IconButton>}
      <IconButton aria-label="Minimize"><MinIcon c={color} /></IconButton>
      {!noMax && <IconButton aria-label="Maximize"><MaxIcon c={color} /></IconButton>}
      <IconButton aria-label="Close"><CloseIcon c={color} /></IconButton>
    </>
  );
}

function TitleBar({ period, active, clocked, order }: { period?: string; active?: boolean; clocked?: boolean; order?: boolean }) {
  return (
    <Bar $active={active}>
      <BarCell><CandlesIcon /></BarCell>
      <BarCell>
        <ChainIcon checked={active} />
        {clocked && <ClockIcon />}
        {!order && <CursorIcon />}
      </BarCell>
      <Picker name="Symbol" value="DXSXXXX" />
      {period && <Picker name="Period" value={period} />}
      {period && <Picker name="Units" value="10 k unités" />}
      <Quote>
        <InfoIcon />
        <QuoteChange>13 083 (-0,96 % -127)</QuoteChange>
        {clocked ? <span>0</span> : <><span>09:24:14</span><Dot /><span>Micro DAX Full0922</span></>}
      </Quote>
      <BarTools $gap={7}>
        {!order && <RefreshSlot><IconButton aria-label="Refresh"><SwapIcon /></IconButton></RefreshSlot>}
        <Frames color={active ? "#c050c0" : undefined} pin={order} />
      </BarTools>
    </Bar>
  );
}

const ToolStrip = styled.footer`
  height: 38px;
  flex: none;
  display: flex;
  align-items: stretch;
  background: #0b0b0b;
  border-top: 1px solid ${OLIVE};
  border-bottom: 2px solid #e6e6de;
`;
const Tool = styled.button<{ $w: number; $bg?: string; $line?: boolean }>`
  ${plainButton}
  width: ${(p) => p.$w}px;
  background: ${(p) => p.$bg ?? "none"};
  border-right: ${(p) => (p.$line ? 1 : 0)}px solid #4e4e1e;
`;
const Chevrons = styled(Tool)`
  color: #a8a8a8;
  font: normal 26px/26px ${FONT};
`;
const ScrollTrack = styled.div`
  flex: 1;
  display: flex;
  margin: 4px 8px 5px 3px;
  border: 1px solid ${OLIVE};
`;
const ScrollArea = styled.div`flex: 1;`;
const ScrollThumb = styled.div`
  width: 9px;
  border: solid ${OLIVE};
  border-width: 0 1px;
`;

function BottomTools() {
  return (
    <ToolStrip>
      <Tool $w={44} $line aria-label="Draw"><PencilIcon /></Tool>
      <Tool $w={18} $line aria-label="Draw options"><Caret /></Tool>
      <Tool $w={42} $line $bg="#1f1f1f" aria-label="Indicators"><IndicatorIcon /></Tool>
      <Tool $w={17} $line aria-label="Indicator options"><Caret /></Tool>
      <Tool $w={31} $bg="#1f78b4" aria-label="Share"><ShareIcon /></Tool>
      <Tool $w={39} $line $bg="#1f1f1f" aria-label="Brackets"><BracketsIcon /></Tool>
      <Tool $w={39} aria-label="Chat"><ChatIcon /></Tool>
      <Tool $w={36} aria-label="Report"><ReportIcon /></Tool>
      <Tool $w={37} aria-label="Order book"><LadderIcon /></Tool>
      <Tool $w={37} aria-label="Windows"><WindowsIcon /></Tool>
      <Tool $w={37} aria-label="Trades"><TradeCandlesIcon /></Tool>
      <Chevrons $w={21}>«</Chevrons>
      <ScrollTrack>
        <Tool $w={22} $line $bg="#222" aria-label="Scroll left"><svg width="6" height="12"><path d="M6 0v12L0 6z" fill="#ffff1e" /></svg></Tool>
        <ScrollArea />
        <ScrollThumb />
        <Tool $w={24} $bg="#222" aria-label="Scroll right"><svg width="6" height="12"><path d="M0 0v12l6-6z" fill="#ffff1e" /></svg></Tool>
      </ScrollTrack>
      <Tool $w={34} aria-label="Fit"><LensIcon sign="fit" /></Tool>
      <Tool $w={38} aria-label="Zoom out"><LensIcon sign="-" /></Tool>
      <Tool $w={38} aria-label="Zoom in"><LensIcon sign="+" /></Tool>
      <Tool $w={35} aria-label="Axis"><AxisKeysIcon down /></Tool>
    </ToolStrip>
  );
}

/* ---------- order book ---------- */

const Summary = styled.div`
  height: 28px;
  flex: none;
  display: flex;
  align-items: center;
  gap: 105px;
  padding-left: 100px;
  background: linear-gradient(#060606, #242424);
  white-space: nowrap;
`;
const SummaryItem = styled.div`
  display: flex;
  align-items: center;
  gap: 4px;
`;
const Pressure = styled.div`
  height: 12px;
  flex: none;
  display: flex;
  padding: 0 1px 4px;
`;
const PressureSide = styled.div<{ $sell?: boolean }>`
  background: ${(p) => (p.$sell ? "linear-gradient(#f05040, #c01c10)" : "linear-gradient(#48c848, #109410)")};
`;

const Book = styled.table`
  width: 100%;
  flex: none;
  table-layout: fixed;
  border-collapse: separate;
  border-spacing: 0;
  color: #d8d8d8;
`;
const HeadCell = styled.th`
  height: 24px;
  padding: 0 1px;
  background: #686868;
  color: #ececec;
  overflow: hidden;
  white-space: nowrap;
  background-image: linear-gradient(#f0f0f0, #f0f0f0);
  background-size: 1px 12px;
  background-position: right center;
  background-repeat: no-repeat;
  &:last-child { background-image: none; }
`;
const HeadIcon = styled.div`
  display: flex;
  justify-content: center;
`;
const BookRow = styled.tr<{ $big?: boolean }>`
  height: ${(p) => (p.$big ? 44 : 22)}px;
  background: #050505;
  &:nth-child(even) { background: #111; }
`;
type Kind = "plain" | "buy" | "sell" | "bid" | "ask" | "bar" | "num";
const cellColor: Record<Kind, string> = { plain: "inherit", num: "inherit", bar: "inherit", buy: "#30960e", sell: "#9c0436", bid: "#ffff3c", ask: "#ffff3c" };
const BookCell = styled.td<{ $kind: Kind; $end?: boolean; $dim?: boolean; $big?: boolean }>`
  padding: ${(p) => (p.$kind === "bar" ? "0" : "0 3px")};
  height: inherit;
  overflow: hidden;
  text-align: ${(p) => (p.$end ? "right" : "left")};
  color: ${(p) => (p.$dim ? "#cfcfcf" : cellColor[p.$kind])};
  background: ${(p) => (p.$kind === "buy" || p.$kind === "sell" ? "#333" : p.$kind === "bid" || p.$kind === "ask" ? "#686868" : "none")};
  border-bottom: 1px solid #505050;
  border-right: ${(p) => (p.$kind === "bid" ? "1px solid #f4f4f4" : "1px solid #484848")};
  font-size: ${(p) => (p.$big ? 34 : 16)}px;
`;
const Clip = styled.div`
  display: flex;
  justify-content: flex-end;
  white-space: nowrap;
`;
const VolumeBar = styled.div<{ $end?: boolean; $big?: boolean }>`
  height: ${(p) => (p.$big ? 43 : 21)}px;
  margin-left: ${(p) => (p.$end ? "auto" : 0)};
  background: #006464;
`;

const COLS = [25, 30, 57, 48, 131, 131, 99, 80, 40, 45, 33, 28];
const BUY_EXEC = [128, 112, 123, 95, 125, 134, 115, 113, 134, 153, 130, 121, 108, 144, 140, 105, 89, 94, 95, 101, 130, 53, 49, 50, 40, 103, 66, 29];
const SELL_EXEC = [130, 112, 91, 106, 76, 86, 97, 224, 100, 60, 88, 79, 60, 55, 58, 476, 63, 46, 53, 78, 58, 74, 120, 80, 61, 90, 53, 46];
const BUY_QTY = [1, 6, 7, 33, 13, 12, 12, 12, 11, 11];
const SELL_QTY = [3, 24, 7, 10, 10, 12, 11, 18, 9, 8];

function OrderBook() {
  return (
    <Book>
      <colgroup>{COLS.map((w, i) => <col key={i} style={{ width: w }} />)}</colgroup>
      <thead>
        <tr>
          <HeadCell><HeadIcon><CrossPageIcon light /></HeadIcon></HeadCell>
          {["A...", "Ache...", "Exé...", "Exécutés", "Offre", "Demande", "Exécutés", "Ex...", "Ve...", "V...."].map((h, i) => <HeadCell key={i}>{h}</HeadCell>)}
          <HeadCell><HeadIcon><CrossPageIcon light /></HeadIcon></HeadCell>
        </tr>
      </thead>
      <tbody>
        {BUY_EXEC.map((b, i) => {
          const big = i === 0;
          return (
            <BookRow key={i} $big={big}>
              <BookCell $kind="plain" />
              <BookCell $kind="plain" />
              <BookCell $kind="buy" $big={big}>{BUY_QTY[i]}</BookCell>
              <BookCell $kind="num">{b}</BookCell>
              <BookCell $kind="bar"><VolumeBar $end $big={big} style={{ width: Math.round(b * 0.275) }} /></BookCell>
              <BookCell $kind="bid" $big={big} $dim={i === 1}>{spaced(13084 - i)}</BookCell>
              <BookCell $kind="ask" $big={big} $end><Clip>{spaced(13085 + i)}</Clip></BookCell>
              <BookCell $kind="bar"><VolumeBar $big={big} style={{ width: Math.round(SELL_EXEC[i] * 0.165) }} /></BookCell>
              <BookCell $kind="num" $end>{SELL_EXEC[i]}</BookCell>
              <BookCell $kind="sell" $end $big={big}>{SELL_QTY[i]}</BookCell>
              <BookCell $kind="plain" />
              <BookCell $kind="plain" />
            </BookRow>
          );
        })}
      </tbody>
    </Book>
  );
}

const OrderForm = styled.form`
  height: 51px;
  flex: none;
  display: flex;
  align-items: flex-end;
  background: #0b0b0b;
  white-space: nowrap;
`;
const CornerBox = styled.div<{ $right?: boolean }>`
  display: flex;
  align-items: center;
  gap: 9px;
  height: 38px;
  padding: 0 4px;
  margin-left: ${(p) => (p.$right ? "auto" : 0)};
  border: solid ${OLIVE};
  border-width: ${(p) => (p.$right ? "1px 0 0 1px" : "1px 1px 0 0")};
`;
const KeyboardSlot = styled.div`padding: 0 10px 9px 121px;`;
const RadioGroup = styled.div`
  display: flex;
  flex-direction: column;
  gap: 4px;
  padding-bottom: 3px;
  width: 76px;
`;
const Choice = styled.label`
  display: flex;
  align-items: center;
  gap: 5px;
`;
const Radio = styled.input`
  appearance: none;
  width: 17px;
  height: 17px;
  border-radius: 50%;
  border: 1px solid #4e4e22;
  background: #242424;
  &:checked { background: radial-gradient(circle, #d8d81c 0 3px, #242424 4px); border-color: #7e7e30; }
`;
const QuantityGroup = styled.label`
  display: flex;
  flex-direction: column;
  width: 62px;
`;
const QuantityTitle = styled.span`
  display: flex;
  align-items: center;
  gap: 6px;
  padding-left: 5px;
`;
const Field = styled.input<{ $w: number; $dim?: boolean }>`
  width: ${(p) => p.$w}px;
  height: 28px;
  padding: 0 2px;
  text-align: right;
  outline: none;
  background: ${(p) => (p.$dim ? "none" : "#000")};
  color: ${(p) => (p.$dim ? "#5f5f1e" : "#c8c81e")};
  border: 1px solid #5c5c26;
`;
const StopGroup = styled.div`
  display: flex;
  align-items: center;
  gap: 4px;
  height: 28px;
  margin: 0 0 2px 5px;
`;
const Check = styled.input`
  appearance: none;
  width: 17px;
  height: 18px;
  margin-right: 3px;
  background: #262626;
  border: 1px solid #5c5c26;
`;

const Depth = styled.div`
  height: 24px;
  flex: none;
  display: flex;
  align-items: center;
  gap: 88px;
  padding-left: 87px;
  border-top: 2px solid ${OLIVE};
  background: linear-gradient(#060606, #262626);
  white-space: nowrap;
`;
const DepthItem = styled.div`
  display: flex;
  align-items: center;
  gap: 3px;
`;

/* ---------- watch list ---------- */

const ListTools = styled(BarTools)`
  gap: 12px;
`;
const ListTable = styled.table`
  width: 100%;
  flex: none;
  table-layout: fixed;
  border-collapse: separate;
  border-spacing: 0;
  border-bottom: 1px solid ${OLIVE};
  white-space: nowrap;
`;
const ListRow = styled.tr<{ $selected?: boolean }>`
  height: 23px;
  &:nth-child(-n + 3) { height: 22px; }
  background: ${(p) => (p.$selected ? "#23235e" : "#040404")};
  &:nth-child(even) { background: #111; }
`;
const ListCell = styled.td<{ $tone?: "up" | "down"; $end?: boolean }>`
  padding: 0 2px 0 1px;
  overflow: hidden;
  text-align: ${(p) => (p.$end ? "right" : "left")};
  color: ${(p) => (p.$tone === "up" ? "#38d038" : p.$tone === "down" ? "#ee4a42" : "#d2d2d2")};
  border-right: 1px solid #5a5a5a;
  &:last-child { border-right: 0; }
`;
const DotSlot = styled.div`
  display: flex;
  justify-content: center;
`;
const CodeHead = styled.span`
  display: flex;
  align-items: center;
  justify-content: flex-end;
  gap: 4px;
  padding-right: 5px;
`;
const Name = styled.span`white-space: pre;`;

const LIST_COLS = [23, 277, 139, 111, 20, 107, 70];
const LIST: [string, string, string, string, string][] = [
  ["Micro DAX Full0922", "-0,96 %", "13 083", "1,00", "DXSX..."],
  ["EUR/USD CFD", "-0,20 %", "1,05015", "0,00001", "EURU..."],
  ["Micro E-mini S&P500 Full0922", "+0,02 %", "3 826,25", "0,25", "MESX..."],
  ["Micro E-mini NASDAQ100 Full0922", "-0,00 %", "11 674,00", "0,75", "MNQX..."],
  ["Micro E-mini DJ30 Full0922", "+0,05 %", "30 947", "2", "MYMX..."],
  ["NIKKEI225 $ Full0922", "-0,26 %", "26 730", "10", "NKDX..."],
  ["Mini Crude Oil Full0822", "-0,18 %", "111,550", "0,025", "QMXX..."],
  ["USD/JPY CFD", "+0,04 %", "136,098", "0,006", "USDJPY"],
  ["Spot  Gold", "+0,01 %", "1 818,79", "0,19", "XAUU..."],
];

function WatchList() {
  return (
    <ListTable>
      <colgroup>{LIST_COLS.map((w, i) => <col key={i} style={{ width: w }} />)}</colgroup>
      <thead>
        <tr>
          <HeadCell><HeadIcon><WrenchIcon /></HeadIcon></HeadCell>
          <HeadCell>Nom</HeadCell>
          <HeadCell>%Var</HeadCell>
          <HeadCell>Dernier</HeadCell>
          <HeadCell>
            <HeadIcon><svg width="14" height="14"><circle cx="7" cy="7" r="6" fill="#a4a4a4" stroke="#eee" /></svg></HeadIcon>
          </HeadCell>
          <HeadCell>Spread</HeadCell>
          <HeadCell>
            <CodeHead><svg width="12" height="9"><path d="M6 1l5 7H1z" fill="#888" stroke="#eee" /></svg>Code</CodeHead>
          </HeadCell>
        </tr>
      </thead>
      <tbody>
        {LIST.map(([name, change, last, spread, code], i) => {
          const tone = change[0] === "+" ? "up" : "down";
          return (
            <ListRow key={name} $selected={i === 0}>
              <ListCell />
              <ListCell><Name>{name}</Name></ListCell>
              <ListCell $end $tone={tone}>{change}</ListCell>
              <ListCell $end $tone={tone}>{last}</ListCell>
              <ListCell><DotSlot><Dot /></DotSlot></ListCell>
              <ListCell $end $tone={tone}>{spread}</ListCell>
              <ListCell>{code}</ListCell>
            </ListRow>
          );
        })}
      </tbody>
    </ListTable>
  );
}

const Desktop = styled.div`
  height: 33px;
  flex: none;
  background: linear-gradient(90deg, #aac6de, #9bb6cc);
`;

/* ---------- app ---------- */

export default function App() {
  return (
    <Screen>
      <GlobalStyle />
      <MenuBar>
        <Brand>
          <CandlesIcon />
          <div><BrandName>ProRealTime</BrandName><BrandTier>Premium</BrandTier></div>
        </Brand>
        <MenuItems>
          {["Fichier", "Affichage", "Trading", "Social", "Objets", "Réglages", "Aide"].map((m) => <IconButton key={m}>{m}</IconButton>)}
        </MenuItems>
        <MenuCell $pad={4}><ChainIcon /></MenuCell>
        <SearchBox><SearchInput placeholder="Recherche ..." aria-label="Recherche" /><SearchIcon /></SearchBox>
        <Spacer />
        <MenuCell $pad={4} $lit><PencilIcon /></MenuCell>
        <MenuCell $pad={4}><FlagIcon /></MenuCell>
        <MenuCell $pad={6}>Kayrnh</MenuCell>
        <MenuCell $pad={4} $dim><PushIcon />Push</MenuCell>
        <MenuCell $pad={4}><SquareIcon /></MenuCell>
        <WindowButtons>
          <IconButton aria-label="Tools"><ToolsIcon /></IconButton>
          <Frames pin noMax />
        </WindowButtons>
      </MenuBar>
      <DesktopStrip>
        <StripIcon $w={44} $bg="linear-gradient(90deg,#fff 20%,#1c80b8 20% 80%,#fff 80%)" />
        <StripIcon $w={66} $bg="repeating-linear-gradient(90deg,#8a3a22 0 8px,#f4f0ea 8px 14px)" />
        <StripIcon $w={48} $bg="#f2f4f0" />
        <StripIcon $w={66} $bg="linear-gradient(90deg,#8ab52e 35%,#f0f4e0 35% 65%,#8ab52e 65%)" />
      </DesktopStrip>
      <Workspace>
        <Column>
          <TitleBar period="1 minute" />
          <MinuteChart />
          <TitleBar period="5 minutes" active />
          <FiveMinuteChart />
          <BottomTools />
        </Column>
        <SideColumn>
          <TitleBar order />
          <Summary>
            <SummaryItem>Ordres : 0<CrossPageIcon /></SummaryItem>
            <SummaryItem>Position : 0<CrossPageIcon /></SummaryItem>
            <SummaryItem>Coût unitaire : -</SummaryItem>
          </Summary>
          <Pressure>
            <PressureSide style={{ width: "51%" }} />
            <PressureSide $sell style={{ width: "49%" }} />
          </Pressure>
          <OrderBook />
          <OrderForm onSubmit={(e) => e.preventDefault()}>
            <CornerBox><LadderIcon arrows /></CornerBox>
            <KeyboardSlot><KeyboardIcon /></KeyboardSlot>
            <RadioGroup>
              <Choice><Radio type="radio" name="kind" defaultChecked />Limite</Choice>
              <Choice><Radio type="radio" name="kind" />Stop</Choice>
            </RadioGroup>
            <QuantityGroup>
              <QuantityTitle><PhoneOffIcon />Qté</QuantityTitle>
              <Field $w={62} defaultValue="3" />
            </QuantityGroup>
            <StopGroup>
              <Choice><Check type="checkbox" />S</Choice>
              <Field $w={24} $dim defaultValue="10" aria-label="Stop points" />
              pts
            </StopGroup>
            <StopGroup>
              <Choice><Check type="checkbox" />Target</Choice>
              <Field $w={15} $dim defaultValue="3" aria-label="Target points" />
              pts
            </StopGroup>
            <CornerBox $right><StrategyIcon /><LadderIcon tool /></CornerBox>
          </OrderForm>
          <Depth>
            <DepthItem>Offre<ArrowIcon />118</DepthItem>
            <DepthItem>112<ArrowIcon left />Demande</DepthItem>
            <DepthItem>Exec : 6 711</DepthItem>
          </Depth>
          <TitleBar period="15 minutes" clocked />
          <QuarterHourChart />
          <Bar>
            <BarCell><CandlesIcon /></BarCell>
            <BarCell><ChainIcon /></BarCell>
            <BarCell $pad={6}>Listes</BarCell>
            <Picker name="List" value="KAYRNH (9)" />
            <ListTools>
              <IconButton aria-label="Add"><AddListIcon /></IconButton>
              <IconButton aria-label="Settings"><WrenchIcon /></IconButton>
            </ListTools>
            <Spacer />
            <BarCell>
              <BarTools $gap={15} $end={4}>
                <IconButton aria-label="Move down"><MoveIcon /></IconButton>
                <IconButton aria-label="Move up"><MoveIcon up /></IconButton>
              </BarTools>
            </BarCell>
            <ListTools>
              <IconButton aria-label="Panes"><PanesIcon /></IconButton>
              <IconButton aria-label="Share"><ShareIcon caret /></IconButton>
              <IconButton aria-label="Report"><ReportIcon /></IconButton>
            </ListTools>
            <BarTools $gap={7}><Frames /></BarTools>
          </Bar>
          <WatchList />
          <Desktop />
        </SideColumn>
      </Workspace>
    </Screen>
  );
}
